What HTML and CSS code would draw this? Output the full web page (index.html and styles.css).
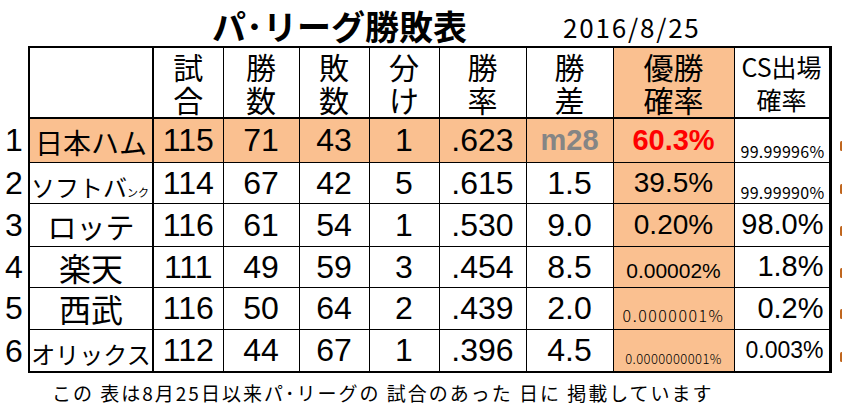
FILE: index.html
```html
<!DOCTYPE html>
<html lang="ja">
<head>
<meta charset="utf-8">
<title>パ・リーグ勝敗表</title>
<link rel="stylesheet" href="styles.css">
</head>
<body>
<div class="top">
  <h1 class="title">パ･リーグ勝敗表</h1>
  <span class="date">2016/8/25</span>
</div>
<table class="standings">
  <colgroup>
    <col class="w-rank"><col class="w-name"><col class="w-a"><col class="w-b"><col class="w-a"><col class="w-a"><col class="w-c"><col class="w-c"><col class="w-d"><col class="w-e"><col class="w-mark">
  </colgroup>
  <tr class="head">
    <td class="rank"></td>
    <td class="c name"></td>
    <td class="c"><span class="ln">試</span><span class="ln">合</span></td>
    <td class="c"><span class="ln">勝</span><span class="ln">数</span></td>
    <td class="c"><span class="ln">敗</span><span class="ln">数</span></td>
    <td class="c"><span class="ln">分</span><span class="ln">け</span></td>
    <td class="c"><span class="ln">勝</span><span class="ln">率</span></td>
    <td class="c"><span class="ln">勝</span><span class="ln">差</span></td>
    <td class="c hl"><span class="ln">優勝</span><span class="ln">確率</span></td>
    <td class="c cs cs-head"><span class="ln">CS出場</span><span class="ln">確率</span></td>
    <td class="mark"></td>
  </tr>
  <tr class="r1 first">
    <td class="rank">1</td>
    <td class="c name hl"><span class="t-nh">日本ハム</span></td>
    <td class="c hl">115</td>
    <td class="c hl">71</td>
    <td class="c hl">43</td>
    <td class="c hl">1</td>
    <td class="c hl">.623</td>
    <td class="c hl gray">m28</td>
    <td class="c hl win red">60.3%</td>
    <td class="c cs tiny">99.99996%</td>
    <td class="mark"><i></i></td>
  </tr>
  <tr class="r2">
    <td class="rank">2</td>
    <td class="c name left"><span class="t-sb">ソフトバ</span><span class="t-sb-s">ンク</span></td>
    <td class="c">114</td>
    <td class="c">67</td>
    <td class="c">42</td>
    <td class="c">5</td>
    <td class="c">.615</td>
    <td class="c">1.5</td>
    <td class="c hl win">39.5%</td>
    <td class="c cs tiny">99.99990%</td>
    <td class="mark"><i></i></td>
  </tr>
  <tr class="r3">
    <td class="rank">3</td>
    <td class="c name"><span class="t-lt">ロッテ</span></td>
    <td class="c">116</td>
    <td class="c">61</td>
    <td class="c">54</td>
    <td class="c">1</td>
    <td class="c">.530</td>
    <td class="c">9.0</td>
    <td class="c hl win">0.20%</td>
    <td class="c cs pct">98.0%</td>
    <td class="mark"><i></i></td>
  </tr>
  <tr class="r4">
    <td class="rank">4</td>
    <td class="c name"><span class="t-big">楽天</span></td>
    <td class="c">111</td>
    <td class="c">49</td>
    <td class="c">59</td>
    <td class="c">3</td>
    <td class="c">.454</td>
    <td class="c">8.5</td>
    <td class="c hl small1">0.00002%</td>
    <td class="c cs pct">1.8%</td>
    <td class="mark"><i></i></td>
  </tr>
  <tr class="r5">
    <td class="rank">5</td>
    <td class="c name"><span class="t-big">西武</span></td>
    <td class="c">116</td>
    <td class="c">50</td>
    <td class="c">64</td>
    <td class="c">2</td>
    <td class="c">.439</td>
    <td class="c">2.0</td>
    <td class="c hl small2">0.0000001%</td>
    <td class="c cs pct">0.2%</td>
    <td class="mark"><i></i></td>
  </tr>
  <tr class="r6 last">
    <td class="rank">6</td>
    <td class="c name"><span class="t-ox">オリックス</span></td>
    <td class="c">112</td>
    <td class="c">44</td>
    <td class="c">67</td>
    <td class="c">1</td>
    <td class="c">.396</td>
    <td class="c">4.5</td>
    <td class="c hl small3">0.0000000001%</td>
    <td class="c cs pct-s">0.003%</td>
    <td class="mark"><i></i></td>
  </tr>
</table>
<p class="note">この 表は8月25日以来パ･リーグの 試合のあった 日に 掲載しています</p>
</body>
</html>
```
FILE: styles.css
```css
html, body {
  margin: 0;
  padding: 0;
  background: #fff;
}
body {
  width: 842px;
  font-family: "Liberation Sans", "Noto Sans CJK JP", sans-serif;
  color: #000;
}
.top {
  display: flex;
  align-items: center;
  height: 46px;
  padding-left: 212px;
  box-sizing: border-box;
}
.title {
  margin: 0;
  font-family: "Noto Sans CJK JP", sans-serif;
  font-weight: 700;
  font-size: 34px;
  line-height: 40px;
  padding-top: 5px;
}
.date {
  margin-left: 96px;
  font-family: "Noto Sans CJK JP", sans-serif;
  font-size: 26px;
  line-height: 30px;
  letter-spacing: 1.8px;
  padding-top: 8px;
}
.standings {
  border-collapse: collapse;
  table-layout: fixed;
  width: 842px;
}
.w-rank { width: 29px; }
.w-name { width: 124px; }
.w-a { width: 70px; }
.w-b { width: 76px; }
.w-c { width: 87px; }
.w-d { width: 121px; }
.w-e { width: 96px; }
.w-mark { width: 12px; }
.standings td {
  padding: 0;
  text-align: center;
  vertical-align: middle;
  font-size: 32px;
  line-height: 1;
  white-space: nowrap;
}
.standings td.c {
  border-left: 1px solid #000;
  border-right: 1px solid #000;
  border-bottom: 1px solid #000;
}
.standings td.name {
  border-left: 2px solid #000;
  border-right: 2px solid #000;
  font-family: "Noto Sans CJK JP", sans-serif;
}
.standings td.cs {
  border-right: 3px solid #000;
  text-align: right;
  padding-right: 4px;
}
.head td.c {
  border-top: 2px solid #000;
  border-bottom: 2px solid #000;
  font-family: "Noto Sans CJK JP", sans-serif;
  font-size: 30px;
}
.ln {
  display: block;
  height: 33px;
  line-height: 33px;
}
.head td.cs-head {
  text-align: center;
  padding-right: 0;
  font-size: 25px;
}
.last td.c {
  border-bottom: 2px solid #000;
}
.head { height: 71px; }
.r1 { height: 44px; }
.r2 { height: 41px; }
.r3 { height: 43px; }
.r4 { height: 41px; }
.r5 { height: 42px; }
.r6 { height: 43px; }
.rank {
  font-size: 32px;
  text-align: center;
}
.hl { background: #fac090; }
.gray {
  color: #858585;
  font-weight: 700;
  font-size: 29px !important;
}
.red {
  color: #ff0000;
  font-weight: 700;
}
.win { font-size: 29px !important; }
.r2 .win, .r3 .win { font-size: 28px !important; }
.pct { font-size: 29px !important; padding-right: 5px !important; }
.pct-s { font-size: 23px !important; padding-right: 5px !important; }
.tiny {
  font-family: "Noto Sans CJK JP", sans-serif;
  font-size: 16px !important;
  vertical-align: bottom !important;
  padding-bottom: 3px !important;
  letter-spacing: 0.3px;
}
.small1 {
  font-size: 21px !important;
  vertical-align: bottom !important;
  padding-bottom: 6px !important;
}
.small2 {
  font-family: "Noto Sans CJK JP", sans-serif;
  font-size: 16px !important;
  font-weight: 300;
  vertical-align: bottom !important;
  padding-bottom: 6px !important;
  letter-spacing: 1.5px;
}
.small3 {
  font-family: "Noto Sans CJK JP", sans-serif;
  font-size: 13px !important;
  font-weight: 300;
  vertical-align: bottom !important;
  padding-bottom: 6px !important;
  letter-spacing: 0.4px;
}
.t-nh { font-size: 28px; }
.t-lt { font-size: 29px; }
.t-big { font-size: 32px; }
.t-ox { font-size: 24px; }
.left { text-align: left !important; padding-left: 1px !important; }
.t-sb { font-size: 24px; }
.t-sb-s { font-size: 11px; }
.mark { text-align: left !important; }
.mark i {
  display: inline-block;
  width: 3px;
  height: 10px;
  margin-left: 8px;
  margin-top: 8px;
  border-radius: 2px;
  background: #c0661e;
}
.note {
  margin: 9px 0 0 52px;
  font-family: "Noto Sans CJK JP", sans-serif;
  font-size: 19px;
  line-height: 22px;
  letter-spacing: 2px;
}
```
